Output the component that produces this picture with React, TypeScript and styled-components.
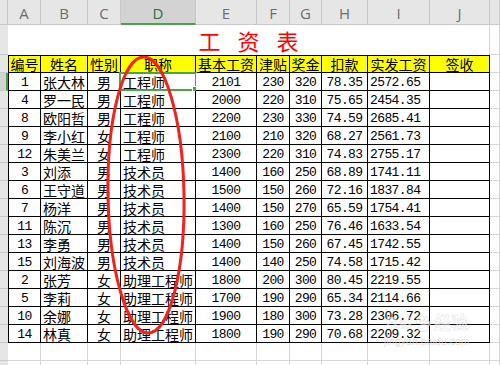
import React from "react";
import styled, { createGlobalStyle, css } from "styled-components";

const Global = createGlobalStyle`
  html, body { margin: 0; padding: 0; background: #ffffff; overflow: hidden; }
  #root { width: 500px; height: 365px; overflow: hidden; }
`;

const COLS = [8, 33, 47, 33, 75, 61, 33, 32, 46, 62, 60, 10];
const LETTERS = ["A", "B", "C", "D", "E", "F", "G", "H", "I", "J"];
const GREEN = "#4aa34a";
const GRID = "#d6d6d6";
const HEADLINE = "#c9c9c9";

type Align = "left" | "center";

const Sheet = styled.div`
  position: relative;
  width: 500px;
  height: 365px;
  overflow: hidden;
  display: grid;
  grid-template-columns: ${COLS.map((c) => `${c}px`).join(" ")};
  grid-template-rows: 25px 30px;
  grid-auto-rows: 18px;
  background: #ffffff;
`;

const Corner = styled.div`
  box-sizing: border-box;
  background: #e6e6e6;
  border-right: 1px solid ${HEADLINE};
  border-bottom: 1px solid ${HEADLINE};
`;

const ColHead = styled.div<{ $active?: boolean }>`
  box-sizing: border-box;
  display: flex;
  align-items: center;
  justify-content: center;
  padding-top: 2px;
  font-family: "Open Sans", "Liberation Sans", sans-serif;
  font-size: 15px;
  color: #6d6d6d;
  background: #e6e6e6;
  border-right: 1px solid ${HEADLINE};
  border-bottom: 1px solid ${HEADLINE};
  ${(p) =>
    p.$active &&
    css`
      background: #d3d3d3;
      color: #217346;
      border-bottom: 2px solid ${GREEN};
    `}
`;

const RowHead = styled.div<{ $active?: boolean }>`
  box-sizing: border-box;
  background: #e6e6e6;
  border-bottom: 1px solid ${HEADLINE};
  ${(p) =>
    p.$active &&
    css`
      background: #d3d3d3;
      border-right: 2px solid ${GREEN};
    `}
`;

const TitleCell = styled.div`
  grid-column: 2 / 12;
  box-sizing: border-box;
  display: flex;
  align-items: flex-end;
  justify-content: center;
  padding-bottom: 2px;
  padding-left: 17px;
  font-family: "Noto Sans CJK SC", sans-serif;
  font-size: 22px;
  line-height: 26px;
  letter-spacing: 17px;
  color: #ff0000;
  border-right: 1px solid ${GRID};
`;

const GridCell = styled.div`
  box-sizing: border-box;
  border-right: 1px solid ${GRID};
  border-bottom: 1px solid ${GRID};
`;

const HeadCell = styled.div<{ $first?: boolean }>`
  box-sizing: border-box;
  display: flex;
  align-items: center;
  justify-content: center;
  padding-top: 1px;
  white-space: nowrap;
  overflow: hidden;
  font-family: "Noto Sans CJK SC", sans-serif;
  font-size: 14px;
  line-height: 17px;
  color: #000;
  background: #ffff00;
  border-top: 1px solid #000;
  border-right: 1px solid #000;
  border-bottom: 1px solid #000;
  ${(p) => p.$first && css`border-left: 1px solid #000;`}
`;

const Cell = styled.div<{ $align: Align; $mono?: boolean; $first?: boolean }>`
  position: relative;
  box-sizing: border-box;
  display: flex;
  align-items: center;
  justify-content: ${(p) => (p.$align === "center" ? "center" : "flex-start")};
  padding: 1px ${(p) => (p.$align === "center" ? "0" : "2px")} 0;
  white-space: nowrap;
  color: #000;
  background: #fff;
  border-right: 1px solid #000;
  border-bottom: 1px solid #000;
  ${(p) => p.$first && css`border-left: 1px solid #000;`}
  ${(p) =>
    p.$mono
      ? css`
          font-family: "Liberation Mono", "DejaVu Sans Mono", monospace;
          font-size: 13px;
          letter-spacing: -0.6px;
          line-height: 17px;
          padding-top: 2px;
        `
      : css`
          font-family: "Noto Sans CJK SC", sans-serif;
          font-size: 14px;
          line-height: 17px;
        `}
`;

const Selection = styled.div`
  position: absolute;
  left: -2px;
  top: -1px;
  right: -2px;
  bottom: -1px;
  border: 2px solid ${GREEN};
  pointer-events: none;
  &::after {
    content: "";
    position: absolute;
    right: -4px;
    bottom: -4px;
    width: 5px;
    height: 5px;
    background: ${GREEN};
    border: 1px solid #fff;
  }
`;

const Mark = styled.svg`
  position: absolute;
  left: 0;
  top: 0;
  width: 500px;
  height: 365px;
  pointer-events: none;
`;

const Watermark = styled.div`
  position: absolute;
  left: 384px;
  top: 314px;
  display: flex;
  flex-direction: column;
  align-items: center;
  gap: 2px;
  pointer-events: none;
  color: rgba(255, 255, 255, 0.55);
  -webkit-text-stroke: 0.5px rgba(160, 160, 160, 0.35);
`;

const WmTop = styled.div`
  display: flex;
  align-items: center;
  gap: 2px;
  font-family: "Liberation Sans", "Noto Sans CJK SC", sans-serif;
  font-size: 17px;
  font-weight: 700;
  line-height: 20px;
`;

const WmSub = styled.div`
  font-family: "Liberation Sans", sans-serif;
  font-size: 10px;
  line-height: 12px;
  letter-spacing: 0.3px;
`;

type Row = [number, string, string, string, number, number, number, string, string];

const DATA: Row[] = [
  [1, "张大林", "男", "工程师", 2101, 230, 320, "78.35", "2572.65"],
  [4, "罗一民", "男", "工程师", 2000, 220, 310, "75.65", "2454.35"],
  [8, "欧阳哲", "男", "工程师", 2200, 230, 330, "74.59", "2685.41"],
  [9, "李小红", "女", "工程师", 2100, 210, 320, "68.27", "2561.73"],
  [12, "朱美兰", "女", "工程师", 2300, 220, 310, "74.83", "2755.17"],
  [3, "刘添", "男", "技术员", 1400, 160, 250, "68.89", "1741.11"],
  [6, "王守道", "男", "技术员", 1500, 150, 260, "72.16", "1837.84"],
  [7, "杨洋", "男", "技术员", 1400, 150, 270, "65.59", "1754.41"],
  [11, "陈沉", "男", "技术员", 1300, 160, 250, "76.46", "1633.54"],
  [13, "李勇", "男", "技术员", 1400, 150, 260, "67.45", "1742.55"],
  [15, "刘海波", "男", "技术员", 1400, 140, 250, "74.58", "1715.42"],
  [2, "张芳", "女", "助理工程师", 1800, 200, 300, "80.45", "2219.55"],
  [5, "李莉", "女", "助理工程师", 1700, 190, 290, "65.34", "2114.66"],
  [10, "余娜", "女", "助理工程师", 1900, 180, 300, "73.28", "2306.72"],
  [14, "林真", "女", "助理工程师", 1800, 190, 290, "70.68", "2209.32"],
];

const HEADERS = ["编号", "姓名", "性别", "职称", "基本工资", "津贴", "奖金", "扣款", "实发工资", "签收"];

export default function App() {
  return (
    <>
      <Global />
      <Sheet>
        <Corner />
        {LETTERS.map((l) => (
          <ColHead key={l} $active={l === "D"}>
            {l}
          </ColHead>
        ))}
        <ColHead />

        <RowHead />
        <TitleCell>工资表</TitleCell>
        <GridCell />

        <RowHead />
        {HEADERS.map((h, i) => (
          <HeadCell key={h} $first={i === 0}>
            {h}
          </HeadCell>
        ))}
        <GridCell />

        {DATA.map((r, ri) => (
          <React.Fragment key={ri}>
            <RowHead $active={ri === 0} />
            <Cell $align="center" $mono $first>
              {r[0]}
            </Cell>
            <Cell $align="left">{r[1]}</Cell>
            <Cell $align="center">{r[2]}</Cell>
            <Cell $align="left">
              {r[3]}
              {ri === 0 && <Selection />}
            </Cell>
            <Cell $align="center" $mono>
              {r[4]}
            </Cell>
            <Cell $align="center" $mono>
              {r[5]}
            </Cell>
            <Cell $align="center" $mono>
              {r[6]}
            </Cell>
            <Cell $align="center" $mono>
              {r[7]}
            </Cell>
            <Cell $align="left" $mono>
              {r[8]}
            </Cell>
            <Cell $align="left" />
            <GridCell />
          </React.Fragment>
        ))}

        {[0, 1].map((k) => (
          <React.Fragment key={`e${k}`}>
            <RowHead />
            {Array.from({ length: 11 }).map((_, i) => (
              <GridCell key={i} />
            ))}
          </React.Fragment>
        ))}

        <Mark viewBox="0 0 500 365">
          <ellipse
            cx="146"
            cy="195"
            rx="38"
            ry="138"
            fill="none"
            stroke="#f2221c"
            strokeWidth="3"
            transform="rotate(-1 146 195)"
          />
        </Mark>
        <Watermark>
          <WmTop>
            <span>Bai</span>
            <svg width="18" height="18" viewBox="0 0 18 18">
              <g fill="rgba(255,255,255,0.55)" stroke="rgba(160,160,160,0.35)" strokeWidth="0.8">
                <ellipse cx="4" cy="6" rx="2" ry="2.6" />
                <ellipse cx="8" cy="3.5" rx="2" ry="2.6" />
                <ellipse cx="12.5" cy="4" rx="2" ry="2.6" />
                <ellipse cx="15" cy="8.5" rx="1.8" ry="2.3" />
                <path d="M4 15 C4 10 8 8.5 10 8.5 C12.5 8.5 15 12 14 15 C13 17 5 17 4 15 Z" />
              </g>
            </svg>
            <span>经验</span>
          </WmTop>
          <WmSub>jingyan.baidu.com</WmSub>
        </Watermark>
      </Sheet>
    </>
  );
}
